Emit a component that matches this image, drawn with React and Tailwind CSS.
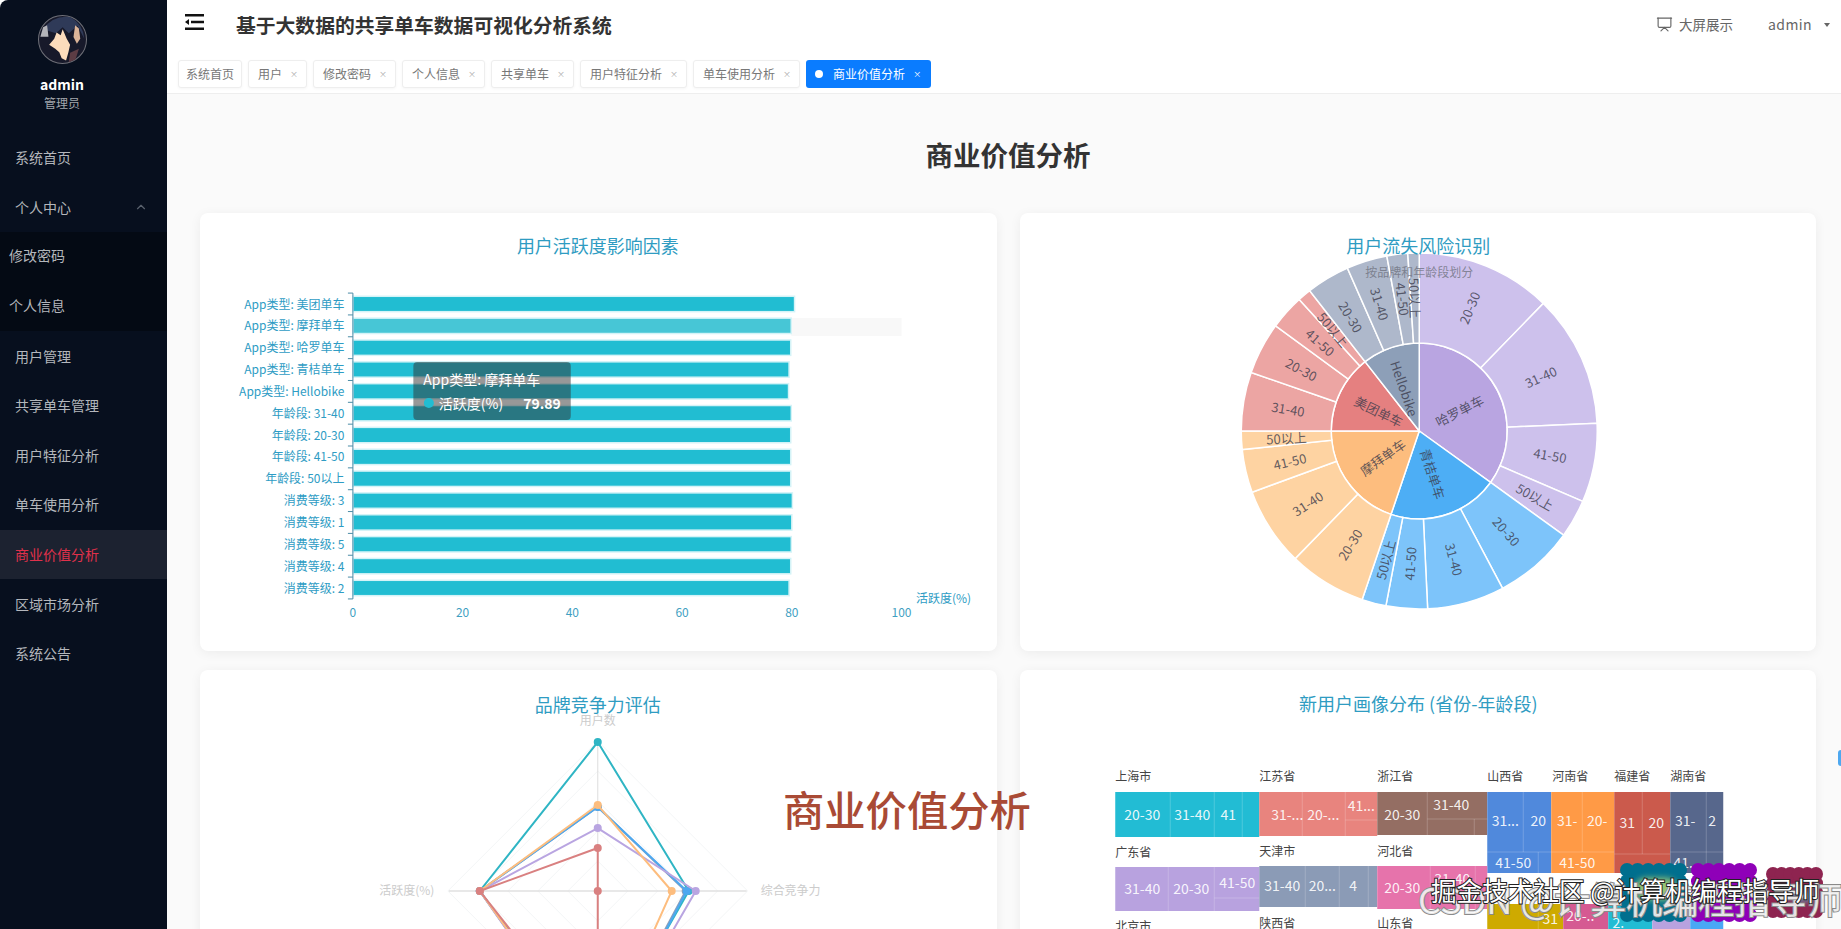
import React from "react";
import { ChevronUp, Presentation } from "lucide-react";

const menuTop = ["系统首页"];
const menuSub = ["修改密码", "个人信息"];
const menuBottom = ["用户管理", "共享单车管理", "用户特征分析", "单车使用分析", "商业价值分析", "区域市场分析", "系统公告"];
const tabs = ["用户", "修改密码", "个人信息", "共享单车", "用户特征分析", "单车使用分析"];

const barData = [
  ["App类型: 美团单车", 80.5], ["App类型: 摩拜单车", 79.89], ["App类型: 哈罗单车", 79.8], ["App类型: 青桔单车", 79.5],
  ["App类型: Hellobike", 79.4], ["年龄段: 31-40", 79.9], ["年龄段: 20-30", 79.8], ["年龄段: 41-50", 79.8],
  ["年龄段: 50以上", 79.8], ["消费等级: 3", 80.1], ["消费等级: 1", 80], ["消费等级: 5", 79.9], ["消费等级: 4", 79.8], ["消费等级: 2", 79.5],
];

// sunburst: angles are clockwise from 12 o'clock
const sunData = [
  { name: "哈罗单车", from: 0, to: 125.8, inner: "#b9a5e1", outer: "#cdc1ec", kids: [["20-30", 44.2], ["31-40", 87.5], ["41-50", 113.3], ["50以上", 125.8]] },
  { name: "青桔单车", from: 125.8, to: 198.7, inner: "#4daef5", outer: "#7dc4fa", kids: [["20-30", 152.1], ["31-40", 177.3], ["41-50", 190.8], ["50以上", 198.7]] },
  { name: "摩拜单车", from: 198.7, to: 270, inner: "#fdbd7e", outer: "#fed3a2", kids: [["20-30", 224.2], ["31-40", 249.9], ["41-50", 264], ["50以上", 270]] },
  { name: "美团单车", from: 270, to: 322, inner: "#e58080", outer: "#eca5a3", kids: [["31-40", 289.2], ["20-30", 306.2], ["41-50", 317.6], ["50以上", 322]] },
  { name: "Hellobike", from: 322, to: 360, inner: "#8d9fb8", outer: "#aeb8cb", kids: [["20-30", 336.2], ["31-40", 349.5], ["41-50", 356.3], ["50以上", 360]] },
];

const radarData = [
  { color: "#2fb5c4", top: 149, right: 91, bottom: 160 },
  { color: "#8d9fb8", top: 84, right: 88, bottom: 165 },
  { color: "#4da8f0", top: 84, right: 89, bottom: 168 },
  { color: "#b9a5e1", top: 63, right: 98, bottom: 170 },
  { color: "#fdbd7e", top: 86, right: 74, bottom: 165 },
  { color: "#d98080", top: 43, right: 0, bottom: 150 },
];

// treemap blocks in card pixels: [x, y, w, h, colour]
const treeBlocks = [
  [95, 122, 144, 45, "#22bcd4"], [239, 122, 118, 44, "#e8847e"], [357, 122, 110, 43, "#946e63"],
  [467, 122, 64, 81, "#5089dc"], [531, 122, 63, 81, "#ff9a46"], [594, 122, 56, 81, "#cb5a4c"], [650, 122, 53, 81, "#57678c"],
  [95, 197, 144, 44, "#b8a2df"], [239, 196, 118, 41, "#8b9bb6"], [357, 196, 110, 43, "#e673ab"],
  [467, 234, 76, 40, "#ceaa00"], [543, 234, 45, 40, "#d55a92"], [588, 234, 44, 40, "#22bcd4"], [632, 234, 38, 40, "#b8a2df"], [670, 234, 33, 40, "#4aa8f5"],
];
const treeLines = [
  [150, 122, 150, 167], [194, 122, 194, 167], [222, 122, 222, 167], [282, 122, 282, 166], [325, 122, 325, 166], [325, 150, 357, 150],
  [407, 122, 407, 165], [407, 149, 467, 149], [454, 149, 454, 165], [503, 122, 503, 182], [467, 182, 531, 182], [518, 182, 518, 203],
  [562, 122, 562, 182], [531, 182, 594, 182], [622, 122, 622, 184], [594, 184, 650, 184], [686, 122, 686, 182], [650, 182, 703, 182], [686, 182, 686, 203],
  [148, 197, 148, 241], [194, 197, 194, 241], [194, 228, 239, 228], [285, 196, 285, 237], [319, 196, 319, 237], [348, 196, 348, 237],
  [410, 196, 410, 239], [455, 196, 455, 239], [518, 234, 518, 274], [410, 225, 467, 225],
];
const treeText = [
  ["20-30", 122, 144], ["31-40", 172, 144], ["41", 208, 144], ["31-...", 267, 144], ["20-...", 303, 144], ["41...", 341, 135],
  ["20-30", 382, 144], ["31-40", 431, 134], ["31...", 485, 150], ["20", 518, 150], ["41-50", 493, 192], ["31-", 547, 150], ["20-", 577, 150],
  ["41-50", 557, 192], ["31", 607, 152], ["20", 636, 152], ["31-", 665, 150], ["2", 692, 150], ["41.", 663, 192],
  ["31-40", 122, 218], ["20-30", 171, 218], ["41-50", 217, 212], ["31-40", 262, 215], ["20...", 302, 215], ["4", 333, 215],
  ["20-30", 382, 217], ["31-40", 432, 208], ["31", 530, 248], ["20-..", 560, 245], ["2.", 598, 252],
];
const treeLabels = [
  ["上海市", 95, 105], ["江苏省", 239, 105], ["浙江省", 357, 105], ["山西省", 467, 105], ["河南省", 532, 105], ["福建省", 594, 105], ["湖南省", 650, 105],
  ["广东省", 95, 181], ["天津市", 239, 180], ["河北省", 357, 180], ["北京市", 95, 255], ["陕西省", 239, 252], ["山东省", 357, 252],
];

const polar = (cx, cy, r, deg) => {
  const a = (deg * Math.PI) / 180;
  return [cx + r * Math.sin(a), cy - r * Math.cos(a)];
};

const sector = (cx, cy, r0, r1, a0, a1) => {
  const large = a1 - a0 > 180 ? 1 : 0;
  const [x1, y1] = polar(cx, cy, r1, a0);
  const [x2, y2] = polar(cx, cy, r1, a1);
  if (r0 === 0) return `M${cx} ${cy}L${x1} ${y1}A${r1} ${r1} 0 ${large} 1 ${x2} ${y2}Z`;
  const [x3, y3] = polar(cx, cy, r0, a1);
  const [x4, y4] = polar(cx, cy, r0, a0);
  return `M${x1} ${y1}A${r1} ${r1} 0 ${large} 1 ${x2} ${y2}L${x3} ${y3}A${r0} ${r0} 0 ${large} 0 ${x4} ${y4}Z`;
};

const RadialLabel = ({ cx, cy, r, a0, a1, text }) => {
  const mid = (a0 + a1) / 2;
  const [x, y] = polar(cx, cy, r, mid);
  const rot = mid < 180 ? mid - 90 : mid - 270;
  return (
    <text x={x} y={y} transform={`rotate(${rot} ${x} ${y})`} textAnchor="middle" dominantBaseline="central" fontSize="13" fill="#3c3c4c" fillOpacity="0.8">
      {text}
    </text>
  );
};

const ChartTitle = ({ x, y, children }) => (
  <text x={x} y={y} textAnchor="middle" dominantBaseline="central" fontSize="18" fill="#2f9cc2">
    {children}
  </text>
);

const BarChart = () => {
  const x0 = 153;
  const unit = 5.49;
  const top = 80;
  const step = 21.86;
  return (
    <svg className="block w-full h-full" viewBox="0 0 797 438">
      <ChartTitle x={398} y={32}>用户活跃度影响因素</ChartTitle>
      <rect x={x0 + 79.89 * unit} y={top + step + 3} width={(100 - 79.89) * unit} height={18} fill="#f8f8f8" />
      {barData.map(([name, value], i) => (
        <g key={name}>
          <rect x={x0} y={top + i * step + 3.2} width={value * unit} height={15.4} fill={i === 1 ? "#47c6d6" : "#21bdd2"} stroke="#d4f3f7" strokeWidth="1.5" />
          <text x={144.5} y={top + i * step + 10} textAnchor="end" dominantBaseline="central" fontSize="12" fill="#2e9cc4">{name}</text>
        </g>
      ))}
      <line x1={x0} y1={top} x2={x0} y2={top + 14 * step} stroke="#4a8ca6" />
      {barData.map((_, i) => (
        <line key={i} x1={148} y1={top + i * step} x2={x0} y2={top + i * step} stroke="#4a8ca6" />
      ))}
      <line x1={148} y1={top + 14 * step} x2={x0} y2={top + 14 * step} stroke="#4a8ca6" />
      {[0, 20, 40, 60, 80, 100].map((t) => (
        <text key={t} x={x0 + t * unit} y={399} textAnchor="middle" dominantBaseline="central" fontSize="12" fill="#3f9fc2">{t}</text>
      ))}
      <text x={744} y={385} textAnchor="middle" dominantBaseline="central" fontSize="12" fill="#2e9cc4">活跃度(%)</text>

      {/* hover tooltip */}
      <rect x={213.5} y={149} width={157.5} height={58} rx="4" fill="#323232" fillOpacity="0.5" />
      <text x={223.5} y={166} dominantBaseline="central" fontSize="14" fill="#fff">App类型: 摩拜单车</text>
      <circle cx={229} cy={190} r={5} fill="#21bdd2" />
      <text x={239} y={190} dominantBaseline="central" fontSize="14" fill="#fff">活跃度(%)</text>
      <text x={361} y={190} textAnchor="end" dominantBaseline="central" fontSize="14" fontWeight="700" fill="#fff">79.89</text>
    </svg>
  );
};

const Sunburst = () => {
  const cx = 399;
  const cy = 218;
  return (
    <svg className="block w-full h-full" viewBox="0 0 796 438">
      {sunData.map((group) => (
        <g key={group.name}>
          <path d={sector(cx, cy, 0, 88, group.from, group.to)} fill={group.inner} stroke="#fff" strokeWidth="1.5" />
          {group.kids.map(([label, end], i) => {
            const start = i === 0 ? group.from : group.kids[i - 1][1];
            return (
              <g key={label}>
                <path d={sector(cx, cy, 88, 178, start, end)} fill={group.outer} stroke="#fff" strokeWidth="1.5" />
                <RadialLabel cx={cx} cy={cy} r={133} a0={start} a1={end} text={label} />
              </g>
            );
          })}
          <RadialLabel cx={cx} cy={cy} r={45} a0={group.from} a1={group.to} text={group.name} />
        </g>
      ))}
      <ChartTitle x={398} y={32}>用户流失风险识别</ChartTitle>
      <text x={399} y={58} textAnchor="middle" dominantBaseline="central" fontSize="12" fill="#6f7280" fillOpacity="0.8">按品牌和年龄段划分</text>
    </svg>
  );
};

const Radar = () => {
  const cx = 398;
  const cy = 221;
  return (
    <svg className="block w-full h-full" viewBox="0 0 797 438">
      {[30, 60, 90, 120, 150].map((r) => (
        <path key={r} d={`M${cx} ${cy - r}L${cx + r} ${cy}L${cx} ${cy + r}L${cx - r} ${cy}Z`} fill="none" stroke="#f3f5f6" />
      ))}
      <line x1={cx} y1={cy - 150} x2={cx} y2={cy + 150} stroke="#ddd" />
      <line x1={cx - 149} y1={cy} x2={cx + 149} y2={cy} stroke="#e0e0e0" strokeWidth="1.5" />
      {radarData.map((s) => (
        <g key={s.color}>
          <path d={`M${cx} ${cy - s.top}L${cx + s.right} ${cy}L${cx} ${cy + s.bottom}L${cx - 118} ${cy}Z`} fill="none" stroke={s.color} strokeWidth="2" />
          <circle cx={cx} cy={cy - s.top} r="4" fill={s.color} />
          <circle cx={cx + s.right} cy={cy} r="4" fill={s.color} />
          <circle cx={cx - 118} cy={cy} r="4" fill={s.color} />
        </g>
      ))}
      <ChartTitle x={398} y={34}>品牌竞争力评估</ChartTitle>
      <text x={398} y={49} textAnchor="middle" dominantBaseline="central" fontSize="12" fill="#ccc">用户数</text>
      <text x={207} y={220} textAnchor="middle" dominantBaseline="central" fontSize="12" fill="#ccc">活跃度(%)</text>
      <text x={591} y={220} textAnchor="middle" dominantBaseline="central" fontSize="12" fill="#ccc">综合竞争力</text>
    </svg>
  );
};

const Treemap = () => (
  <svg className="block w-full h-full" viewBox="0 0 796 438">
    <ChartTitle x={398} y={33}>新用户画像分布 (省份-年龄段)</ChartTitle>
    {treeLabels.map(([name, x, y]) => (
      <text key={name} x={x} y={y} dominantBaseline="central" fontSize="12" fill="#444">{name}</text>
    ))}
    {treeBlocks.map(([x, y, w, h, color]) => (
      <rect key={`${x}-${y}`} x={x} y={y} width={w} height={h} fill={color} />
    ))}
    {treeLines.map(([x1, y1, x2, y2], i) => (
      <line key={i} x1={x1} y1={y1} x2={x2} y2={y2} stroke="#fff" strokeOpacity="0.2" />
    ))}
    {treeText.map(([label, x, y], i) => (
      <text key={i} x={x} y={y} textAnchor="middle" dominantBaseline="central" fontSize="14" fill="#fff" fillOpacity="0.9">{label}</text>
    ))}
  </svg>
);

const Card = ({ children }) => (
  <div className="h-[438px] overflow-hidden rounded-lg bg-white shadow-[0_2px_12px_rgba(0,0,0,0.06)]">{children}</div>
);

const Avatar = () => (
  <svg width="49" height="49" viewBox="55 30 145 145">
    <circle cx="127.5" cy="102.5" r="71" fill="#17192a" stroke="#6f7078" strokeWidth="3" />
    <path d="M70 72Q100 30 150 36Q188 56 192 100L172 62L146 84L128 66L108 84Z" fill="#2f3a58" />
    <path d="M62 94L70 66L82 60L86 94Z" fill="#b4b4ba" />
    <path d="M88 118L103 100L110 82L122 90L128 72L140 100L150 118L145 140L138 165L125 158L118 140L106 130Z" fill="#fbdcbc" />
    <path d="M165 60L176 70L180 100L170 115L160 95Z" fill="#dcb498" />
    <path d="M150 142L176 130L166 162L146 170Z" fill="#5c3c44" />
  </svg>
);

const Blob = ({ w, h, color }) => {
  const r = 7;
  const dots = [];
  for (let i = 0; i <= 5; i++) {
    const x = r + ((w - 2 * r) * i) / 5;
    dots.push([x, r], [x, h - r]);
  }
  for (let i = 1; i < 4; i++) {
    const y = r + ((h - 2 * r) * i) / 4;
    dots.push([r, y], [w - r, y]);
  }
  return (
    <svg width={w} height={h} className="block">
      <rect x={r} y={r} width={w - 2 * r} height={h - 2 * r} fill={color} />
      {dots.map(([x, y], i) => (
        <circle key={i} cx={x} cy={y} r={r} fill={color} />
      ))}
    </svg>
  );
};

const MenuItem = ({ label, active, sub }) => (
  <div
    className={`flex h-[49.6px] items-center text-[14px] ${sub ? "pb-[2px] pl-[9px]" : "pl-[15px]"} ${
      active ? "bg-[#1c2230] text-[#e0314b]" : "text-[#b4b7bc]"
    }`}
  >
    {label}
  </div>
);

const Tab = ({ label }) => (
  <div className="flex h-[28px] items-center rounded-[3px] border border-[#eeeeee] bg-white pl-[9px] pr-[9px] text-[12px] text-[#777] shadow-[0_1px_3px_rgba(0,0,0,0.04)]">
    {label}
    <span className="ml-[8px] w-[7px] text-center text-[8px] leading-none text-[#aaa]">×</span>
  </div>
);

const App = () => {
  return (
    <div className="relative flex h-[929px] w-full overflow-hidden bg-white font-['Noto_Sans_CJK_SC','Noto_Sans',sans-serif]">
      {/* sidebar */}
      <aside className="h-full w-[167px] shrink-0 rounded-tl-lg bg-[#070f1e]">
        <div className="flex h-[133px] w-[124px] flex-col items-center pt-[15px]">
          <Avatar />
          <div className="mt-[10px] text-[14px] font-bold leading-[20px] text-white">admin</div>
          <div className="text-[12px] leading-[18px] text-[#a3a7ad]">管理员</div>
        </div>
        {menuTop.map((m) => (
          <MenuItem key={m} label={m} />
        ))}
        <div className="flex h-[49.6px] items-center justify-between pl-[15px] pr-[19px] text-[14px] text-[#b4b7bc]">
          个人中心
          <ChevronUp size={14} color="#59616d" />
        </div>
        <div className="bg-[#040a14]">
          {menuSub.map((m) => (
            <MenuItem key={m} label={m} sub />
          ))}
        </div>
        {menuBottom.map((m) => (
          <MenuItem key={m} label={m} active={m === "商业价值分析"} />
        ))}
      </aside>

      <div className="flex min-w-0 flex-1 flex-col">
        {/* header */}
        <header className="h-[94px] shrink-0 border-b border-[#eeeeee] bg-white">
          <div className="flex h-[52px] items-center pb-[3px] pl-[18px] pr-[11px]">
            <svg width="19" height="16" viewBox="0 0 19 16" className="-mt-[6px]">
              <path d="M0 1.2h19M6 8h13M0 14.8h19" stroke="#111" strokeWidth="2.4" fill="none" />
              <path d="M0 8l4-3v6z" fill="#111" />
            </svg>
            <h1 className="ml-[32px] text-[19.8px] font-bold text-[#333]">基于大数据的共享单车数据可视化分析系统</h1>
            <div className="ml-auto flex items-center text-[13.5px] text-[#666]">
              <Presentation size={17} strokeWidth={1.6} />
              <span className="ml-[6px]">大屏展示</span>
              <span className="ml-[35px] text-[14px] tracking-[0.4px]">admin</span>
              <span className="ml-[12px] h-0 w-0 border-x-[3px] border-t-[4px] border-x-transparent border-t-[#666]" />
            </div>
          </div>
          <div className="flex gap-[6px] pl-[11px] pt-[8px]">
            <div className="flex h-[28px] items-center rounded-[3px] border border-[#eeeeee] bg-white px-[7px] text-[12px] text-[#777] shadow-[0_1px_3px_rgba(0,0,0,0.04)]">
              系统首页
            </div>
            {tabs.map((t) => (
              <Tab key={t} label={t} />
            ))}
            <div className="flex h-[28px] items-center rounded-[3px] bg-[#0a7cff] pl-[9px] pr-[10px] text-[12px] text-white">
              <span className="h-[8px] w-[8px] rounded-full bg-white" />
              <span className="ml-[10px]">商业价值分析</span>
              <span className="ml-[8px] text-[8px] leading-none">×</span>
            </div>
          </div>
        </header>

        {/* content */}
        <main className="min-h-0 flex-1 bg-[#fafafa] pl-[33px] pr-[25px]">
          <h2 className="pb-[39px] pt-[40px] text-center text-[27.5px] font-bold leading-[40px] text-[#333]">商业价值分析</h2>
          <div className="grid grid-cols-2 gap-x-[23px] gap-y-[19px]">
            <Card>
              <BarChart />
            </Card>
            <Card>
              <Sunburst />
            </Card>
            <Card>
              <Radar />
            </Card>
            <Card>
              <Treemap />
            </Card>
          </div>
        </main>
      </div>

      {/* video overlays */}
      <div className="absolute left-[783px] top-[778px] whitespace-nowrap text-[41.3px] font-medium leading-[60px] text-[#a94a35]">商业价值分析</div>
      <div className="absolute right-0 top-[750px] h-[16px] w-[3px] rounded-l-full bg-[#4da8f0]" />
      <div className="absolute left-[1620px] top-[863px]">
        <Blob w={67} h={59} color="#006f8e" />
      </div>
      <div className="absolute left-[1691px] top-[863px]">
        <Blob w={66} h={59} color="#8f00b8" />
      </div>
      <div className="absolute left-[1766px] top-[867px]">
        <Blob w={57} h={51} color="#8e2450" />
      </div>
      <div className="absolute left-[1635px] top-[878px] h-[22px] w-[42px] rounded-full bg-[#d8e86a] opacity-70 blur-[3px]" />
      <div className="absolute left-[1790px] top-[890px] h-[12px] w-[24px] rounded-full bg-[#4fd0dc] opacity-60 blur-[3px]" />
      <div className="absolute left-[1418px] top-[876px] whitespace-nowrap text-[36px] leading-[44px] text-white/80 [-webkit-text-stroke:2px_#8a8a8a] [paint-order:stroke_fill]">
        CSDN @计算机编程指导师
      </div>
      <div className="absolute left-[1431px] top-[871px] whitespace-nowrap text-[25.6px] leading-[38px] text-white [-webkit-text-stroke:2px_#222] [paint-order:stroke_fill]">
        掘金技术社区 @计算机编程指导师
      </div>
    </div>
  );
};

export default App;
